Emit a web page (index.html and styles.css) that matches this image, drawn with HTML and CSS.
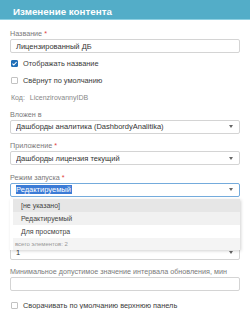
FILE: index.html
```html
<!DOCTYPE html>
<html lang="ru">
<head>
<meta charset="utf-8">
<link rel="stylesheet" href="styles.css">
</head>
<body>
<div class="header"><span class="title">Изменение контента</span></div>
<div class="content">
  <div class="field tight">
    <div class="label">Название <span class="req">*</span></div>
    <div class="ctl">Лицензированный ДБ</div>
  </div>
  <div class="check">
    <span class="box on"><svg viewBox="0 0 8 8" width="7" height="7"><path d="M1.6 4.2 L3.2 5.7 L6.4 2.3" fill="none" stroke="#fff" stroke-width="1.2"/></svg></span>
    <span>Отображать название</span>
  </div>
  <div class="check">
    <span class="box"></span>
    <span>Свёрнут по умолчанию</span>
  </div>
  <div class="code">Код: <span class="code-val">LicenzirovannyIDB</span></div>
  <div class="field">
    <div class="label">Вложен в</div>
    <div class="ctl select"><span class="val">Дашборды аналитика (DashbordyAnalitika)</span><span class="arrow"></span></div>
  </div>
  <div class="field">
    <div class="label">Приложение <span class="req">*</span></div>
    <div class="ctl select"><span class="val">Дашборды лицензия текущий</span><span class="arrow"></span></div>
  </div>
  <div class="field open">
    <div class="label">Режим запуска <span class="req">*</span></div>
    <div class="ctl select focus"><span class="val"><span class="sel">Редактируемый</span></span><span class="arrow"></span></div>
    <div class="dropdown">
      <div class="list">
        <div class="opt hover">[не указано]</div>
        <div class="opt current">Редактируемый</div>
        <div class="opt">Для просмотра</div>
        <div class="foot">всего элементов: 2</div>
      </div>
    </div>
  </div>
  <div class="field">
    <div class="label">&nbsp;</div>
    <div class="ctl select"><span class="val"></span><span class="arrow"></span></div>
  </div>
  <div class="field">
    <div class="label">&nbsp;</div>
    <div class="ctl select"><span class="val">1</span><span class="arrow"></span></div>
  </div>
  <div class="field">
    <div class="label">Минимальное допустимое значение интервала обновления, мин</div>
    <div class="ctl"></div>
  </div>
  <div class="check">
    <span class="box"></span>
    <span>Сворачивать по умолчанию верхнюю панель</span>
  </div>
</div>
</body>
</html>
```
FILE: styles.css
```css
* { box-sizing: border-box; }
body {
  margin: 0;
  width: 250px;
  height: 309px;
  overflow: hidden;
  background: #fff;
  font-family: "Liberation Sans", Arial, sans-serif;
}
.header {
  height: 20px;
  background: #53adc8;
  border-bottom: 1px solid #8fd0e2;
  padding: 1px 0 0 13px;
}
.title {
  color: #fff;
  font-weight: bold;
  font-size: 9.8px;
  line-height: 10px;
}
.content {
  padding: 8px 10px 0;
}
.field {
  position: relative;
  margin-bottom: 6.5px;
}
.field.tight { margin-bottom: 2.5px; }
.label {
  font-size: 7.2px;
  line-height: 11px;
  color: #7a7a7a;
  white-space: nowrap;
}
.req { color: #e0413a; }
.ctl {
  height: 14px;
  border: 1px solid #d4d4d4;
  border-radius: 2px;
  font-size: 7.5px;
  color: #333;
  padding: 0 5px;
  display: flex;
  align-items: center;
  white-space: nowrap;
  background: #fff;
}
.select .val { flex: 1; overflow: hidden; }
.arrow {
  width: 0;
  height: 0;
  border-left: 2px solid transparent;
  border-right: 2px solid transparent;
  border-top: 3px solid #666;
  margin-right: 1px;
}
.focus { border-color: #74abdc; }
.sel {
  background: #3b7bd6;
  color: #fff;
  margin-left: -1px;
  padding: 0 1px;
}
.check {
  display: flex;
  align-items: center;
  height: 16.5px;
  font-size: 7.4px;
  color: #3a3a3a;
  padding-left: 1px;
  gap: 5px;
  white-space: nowrap;
}
.box {
  width: 7px;
  height: 7px;
  flex: none;
  border: 1px solid #c2c2c2;
  border-radius: 1px;
  background: #fff;
  display: flex;
}
.box.on {
  background: #1f6fb8;
  border-color: #1f6fb8;
}
.box svg { margin: -1px; }
.code {
  margin-top: 3px;
  margin-bottom: 6px;
  font-size: 7px;
  line-height: 11px;
  color: #888;
  padding-left: 1px;
}
.code-val { margin-left: 3px; }
.dropdown {
  position: absolute;
  top: 27px;
  left: 0;
  right: 0;
  z-index: 5;
  background: #fff;
  box-shadow: 1px 1px 3px rgba(0,0,0,0.18);
}
.list { margin-left: 3px; }
.opt {
  height: 13px;
  line-height: 13px;
  font-size: 7px;
  color: #444;
  padding-left: 8px;
}
.opt.hover { background: #e6e6e6; }
.opt.current { background: #f1f1f1; }
.foot {
  height: 12px;
  line-height: 12px;
  font-size: 6px;
  color: #999;
  background: #f4f4f4;
  padding-left: 2px;
}
```
